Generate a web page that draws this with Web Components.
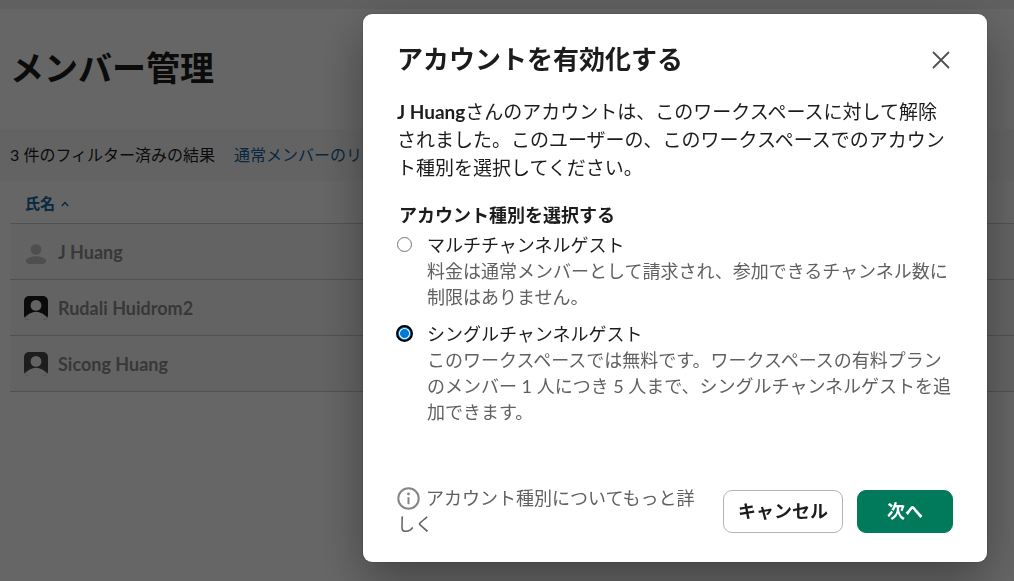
<!DOCTYPE html>
<html lang="ja">
<head>
<meta charset="utf-8">
<meta name="viewport" content="width=device-width, initial-scale=1">
<title>メンバー管理</title>
<style>
  body {
    margin: 0;
    min-height: 100vh;
    background: #fff;
    color: #1d1c1d;
    font-family: Lato, "Noto Sans CJK JP", sans-serif;
  }
</style>
</head>
<body>
<member-admin></member-admin>
<modal-dialog heading="アカウントを有効化する">
  <p><b>J Huang</b>さんのアカウントは、このワークスペースに対して解除されました。このユーザーの、このワークスペースでのアカウント種別を選択してください。</p>
  <account-type-picker></account-type-picker>
  <help-link slot="footer" href="#guests">アカウント種別についてもっと詳しく</help-link>
  <action-button slot="footer">キャンセル</action-button>
  <action-button slot="footer" primary>次へ</action-button>
</modal-dialog>

<script>
const define = (name, markup, setup) => {
  const template = document.createElement("template");
  template.innerHTML = markup;
  customElements.define(name, class extends HTMLElement {
    connectedCallback() {
      if (this.shadowRoot) return;
      this.attachShadow({ mode: "open" }).append(template.content.cloneNode(true));
      if (setup) setup(this, this.shadowRoot);
    }
  });
};

define("user-avatar", `
  <style>
    :host { display: block; width: 24px; height: 24px; border-radius: 5px; overflow: hidden; background: #1d1c1d; }
    :host([kind="soft"]) { background: #4a4a4a; }
    :host([kind="blank"]) { background: #fbfbfb; }
    svg { display: block; fill: #f8f8f8; }
    .body-small { display: none; }
    :host([kind="blank"]) svg { fill: #c6c6c6; }
    :host([kind="blank"]) .body-small { display: inline; }
    :host([kind="blank"]) .body-large { display: none; }
  </style>
  <svg width="24" height="24" viewBox="0 0 24 24" aria-hidden="true">
    <circle cx="12" cy="9.4" r="5.4"/>
    <path class="body-large" d="M0 22.5C3.5 18 8 15.7 12 15.7S20.5 18 24 22.5V24H0z"/>
    <path class="body-small" d="M1.8 20.5C2.8 17.8 7 16.2 12 16.2S21.2 17.8 22.2 20.5C22.4 22.5 21.4 24 19 24H5C2.600 24 1.600 22.500 1.800 20.500z"/>
  </svg>`);

define("member-admin", `
  <style>
    :host { display: block; }
    .strip { height: 9px; background: #f0f0f0; }
    header { display: flex; align-items: center; height: 120px; padding: 0 10px; box-sizing: border-box; padding-bottom: 2px; }
    h1 { margin: 0; font-size: 34px; line-height: 40px; font-weight: 700; }
    .filters { display: flex; align-items: center; gap: 19px; height: 52px; padding: 0 10px; background: #f8f8f8; font-size: 16px; line-height: 24px; white-space: nowrap; overflow: hidden; }
    a { color: #1264a3; text-decoration: none; }
    .wrap { padding-left: 10px; }
    table { width: 100%; border-collapse: collapse; }
    th { height: 42px; padding: 0 15px; text-align: left; font-size: 15px; color: #1264a3; border-bottom: 1px solid #ccc; }
    th span { display: flex; align-items: center; gap: 6px; }
    th svg { margin-top: 4px; }
    td { height: 55px; padding: 0 14px; background: #f8f8f8; border-bottom: 1px solid #ccc; }
    .person { display: flex; align-items: center; gap: 10px; font-size: 18px; line-height: 24px; font-weight: 700; color: #8d8d8e; }
  </style>
  <div class="strip"></div>
  <header><h1>メンバー管理</h1></header>
  <div class="filters"><span>3 件のフィルター済みの結果</span><a href="#members">通常メンバーのリスト</a></div>
  <div class="wrap">
    <table>
      <thead><tr><th scope="col"><span>氏名
        <svg width="8" height="6" viewBox="0 0 8 6" fill="none" stroke="currentColor" stroke-width="1.4" aria-hidden="true"><path d="M.8 5 4 1.6 7.2 5"/></svg>
      </span></th></tr></thead>
      <tbody>
        <tr><td><div class="person"><user-avatar kind="blank"></user-avatar>J Huang</div></td></tr>
        <tr><td><div class="person"><user-avatar></user-avatar>Rudali Huidrom2</div></td></tr>
        <tr><td><div class="person"><user-avatar kind="soft"></user-avatar>Sicong Huang</div></td></tr>
      </tbody>
    </table>
  </div>`);

define("modal-dialog", `
  <style>
    :host { position: fixed; inset: 0; display: flex; justify-content: flex-end; align-items: flex-start; padding: 14px 27px; background: rgba(0, 0, 0, .6); overflow: hidden; }
    section { box-sizing: border-box; width: 100%; max-width: 624px; padding: 27px 34px 25px; border-radius: 9px; background: #fff; box-shadow: 0 0 0 1px rgba(29, 28, 29, .13), 0 18px 48px rgba(0, 0, 0, .35); }
    header { display: flex; align-items: flex-start; justify-content: space-between; }
    h2 { margin: 0; font-size: 26px; line-height: 36px; font-weight: 700; }
    button { display: grid; place-items: center; width: 24px; height: 38px; padding: 0; border: 0; background: none; color: #505050; }
    .body { padding-top: 19px; }
    ::slotted(p) { margin: 0 0 18px; font-size: 19px; line-height: 28px; }
    footer { display: flex; align-items: center; gap: 14px; padding-top: 49px; }
  </style>
  <section role="dialog" aria-modal="true" aria-labelledby="title">
    <header>
      <h2 id="title"></h2>
      <button type="button" aria-label="閉じる">
        <svg width="24" height="24" viewBox="0 0 24 24" fill="none" stroke="currentColor" stroke-width="1.8" stroke-linecap="round" aria-hidden="true"><path d="m4.500 4.500 15 15m0-15-15 15"/></svg>
      </button>
    </header>
    <div class="body"><slot></slot></div>
    <footer><slot name="footer"></slot></footer>
  </section>`,
  (host, root) => { root.querySelector("h2").textContent = host.getAttribute("heading"); });

define("account-type-picker", `
  <style>
    :host { display: block; font-size: 18px; line-height: 26px; }
    fieldset { margin: 0; padding: 0; border: 0; min-width: 0; }
    legend { padding: 0 2px 2px; font-weight: 700; line-height: 30px; }
    .option { display: grid; grid-template-columns: 16px 1fr; column-gap: 14px; padding-bottom: 11px; }
    input { appearance: none; box-sizing: border-box; width: 15px; height: 15px; margin: 5px 0 0; border: 1px solid #767676; border-radius: 50%; background: #fff; }
    input:checked { border: 2px solid #0078d4; background: radial-gradient(circle, #0078d4 4px, #fff 5px); outline: 2px solid #000; outline-offset: -1px; }
    p { grid-column: 2; margin: 0; color: #616061; }
  </style>
  <fieldset>
    <legend>アカウント種別を選択する</legend>
    <div class="option">
      <input type="radio" name="type" id="multi" aria-describedby="multi-note">
      <label for="multi">マルチチャンネルゲスト</label>
      <p id="multi-note">料金は通常メンバーとして請求され、参加できるチャンネル数に制限はありません。</p>
    </div>
    <div class="option">
      <input type="radio" name="type" id="single" aria-describedby="single-note" checked>
      <label for="single">シングルチャンネルゲスト</label>
      <p id="single-note">このワークスペースでは無料です。ワークスペースの有料プランのメンバー 1 人につき 5 人まで、シングルチャンネルゲストを追加できます。</p>
    </div>
  </fieldset>`);

define("help-link", `
  <style>
    :host { display: block; flex: 1; font-size: 18px; line-height: 26px; }
    a { color: #616061; text-decoration: none; }
    svg { vertical-align: -5px; margin-right: 6px; }
  </style>
  <a><svg width="23" height="23" viewBox="0 0 23 23" fill="none" stroke="#868686" stroke-width="2" aria-hidden="true"><circle cx="11.5" cy="11.5" r="10.2"/><path d="M11.5 10.2v7"/><circle cx="11.5" cy="6.900" r="1.4" fill="#868686" stroke="none"/></svg><slot></slot></a>`,
  (host, root) => { root.querySelector("a").href = host.getAttribute("href"); });

define("action-button", `
  <style>
    :host { display: block; }
    button { box-sizing: border-box; height: 43px; min-width: 96px; padding: 0 14px; border: 1px solid #b4b4b4; border-radius: 9px; background: #fff; color: #1d1c1d; font: inherit; font-size: 18px; line-height: 24px; font-weight: 700; }
    :host([primary]) button { border-color: #007a5a; background: #007a5a; color: #fff; }
  </style>
  <button type="button"><slot></slot></button>`);
</script>
</body>
</html>
